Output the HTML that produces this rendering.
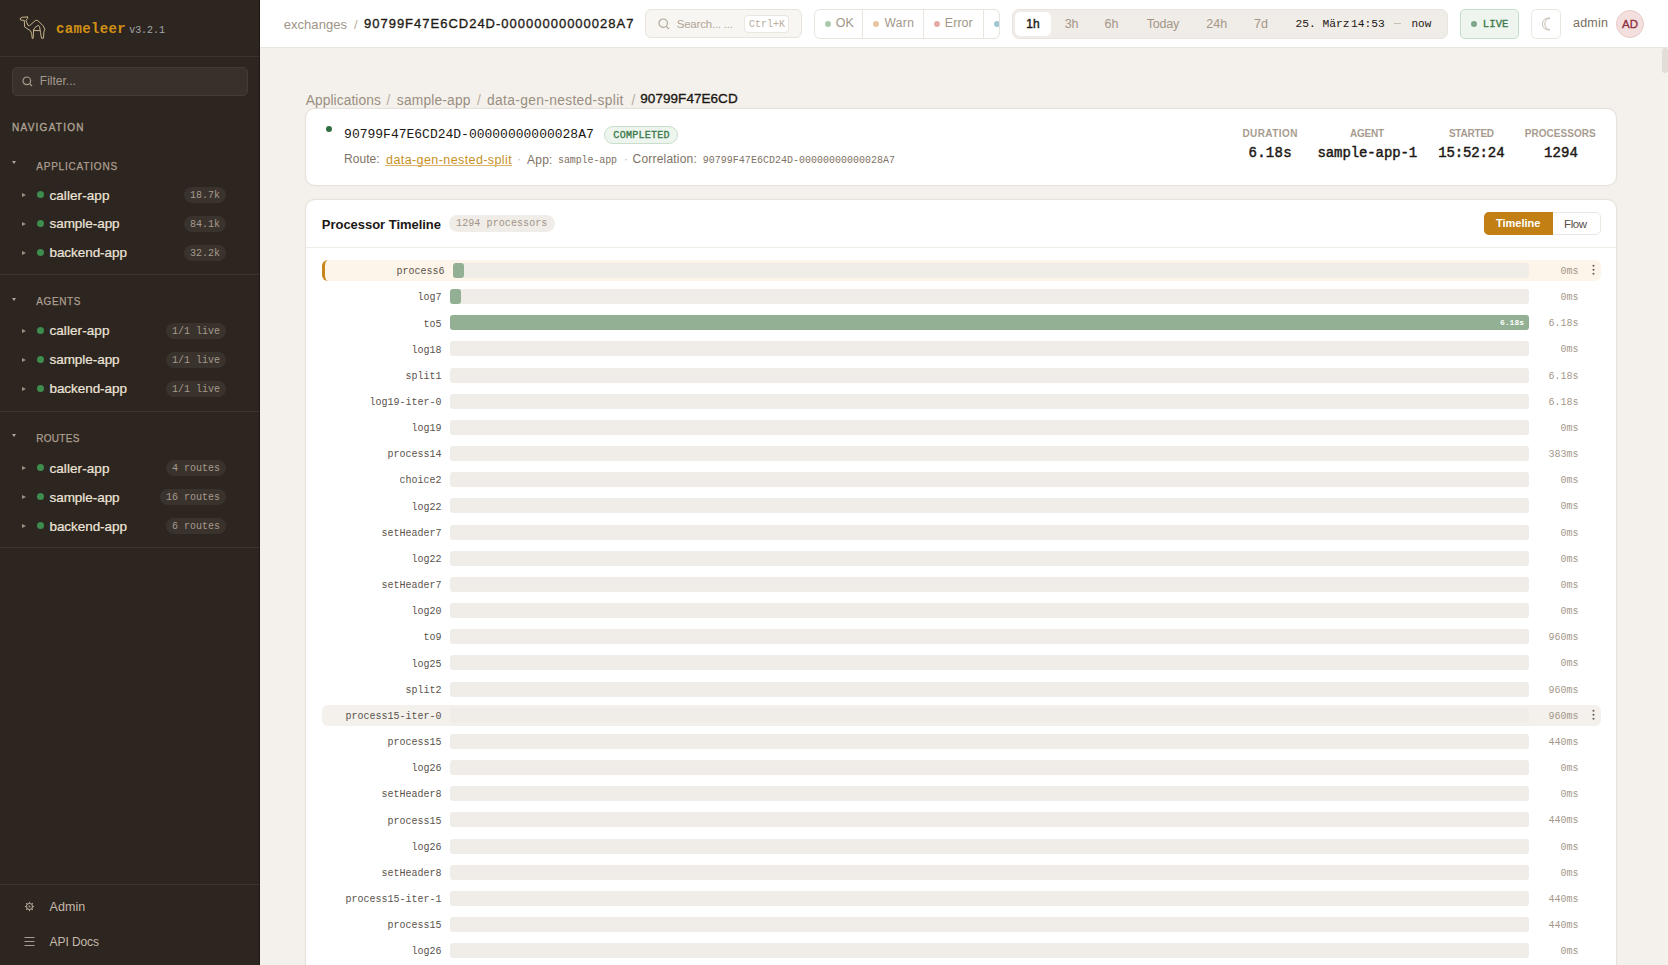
<!DOCTYPE html>
<html><head><meta charset="utf-8"><style>
*{box-sizing:border-box;margin:0;padding:0}
html,body{width:1668px;height:965px;overflow:hidden;background:#f4f1ec;font-family:"Liberation Sans",sans-serif}
.mono{font-family:"Liberation Mono",monospace}
.abs{position:absolute;white-space:nowrap}
#sb{position:absolute;left:0;top:0;width:260px;height:965px;background:#2d2520;border-right:1px solid #1c1713;z-index:1}
.sep{position:absolute;left:0;width:259px;height:1px;background:#3b332c}
.sbh{position:absolute;left:36px;font-size:10px;font-weight:bold;color:#b5a797;letter-spacing:0.65px;line-height:10px}
.caret{position:absolute;left:12px;width:0;height:0;border-left:2px solid transparent;border-right:2px solid transparent;border-top:3px solid #b5a797}
.item{position:absolute;left:0;width:259px;height:20px}
.item .tri{position:absolute;left:21.5px;top:8px;width:0;height:0;border-top:2.2px solid transparent;border-bottom:2.2px solid transparent;border-left:4px solid #9d9183}
.item .dot{position:absolute;left:37px;top:5.5px;width:7px;height:7px;border-radius:50%;background:#3e8c4e}
.item .nm{position:absolute;left:50px;top:2px;font-size:13px;color:#ede5da;line-height:16px;letter-spacing:0.15px;white-space:nowrap}
.item .bd{position:absolute;right:34px;top:2px;height:16px;border-radius:8px;background:#3a322c;color:#a59a8c;font-family:"Liberation Mono",monospace;font-size:10px;line-height:16px;padding:0 6px;white-space:nowrap}
#hd{position:absolute;left:260px;top:0;width:1408px;height:48px;background:#fff;border-bottom:1px solid #e9e5de}
.card{position:absolute;background:#fff;border:1px solid #e6e1da;box-shadow:0 0 1px rgba(120,100,80,0.12)}

</style></head><body>
<div id="sb">
<svg class="abs" style="left:15px;top:12px" width="35" height="32" viewBox="0 0 35 32" fill="none" stroke="#cdbb8f" stroke-width="0.95" stroke-linejoin="round" stroke-linecap="round">
<path d="M12.6 5 L7.6 5.2 Q5 5.6 5 7.3 Q5.5 8.4 8 8.3 L9.3 8.4 L9.6 14.9 L15.6 18.9 L16.6 21.6 L17.3 26.5 L18.2 26.2 L18.6 17.9"/>
<path d="M12.6 5 L12.6 6.5 L10.9 8.3 L12.9 13.3 L14.6 13.6 L20.6 8.3 L22.9 8.6 L28.2 13.9 L29.9 17.3 L28.9 19.9 L28.5 26.2 L26.5 26.2 L25.5 20.6 L24.6 14.6 L23.2 13.3 L19.9 15.6 L18.6 17.9"/>
<path d="M18.9 18.6 L24.6 18.6"/>
</svg>
<div id="logo" class="abs" style="left:56.10px;top:21.20px;font-family:'Liberation Mono',monospace;font-size:14px;font-weight:bold;color:#d29014;line-height:17px;letter-spacing:0.329px;">cameleer</div>
<div id="ver" class="abs" style="left:129.18px;top:25.44px;font-family:'Liberation Mono',monospace;font-size:10px;color:#a3a8ad;line-height:12px;letter-spacing:-0.036px;">v3.2.1</div>
<div class="sep" style="top:56px"></div>
<div class="abs" style="left:12px;top:67px;width:236px;height:29px;border-radius:5px;background:#38312b;border:1px solid #443b34"></div>
<svg class="abs" style="left:22px;top:76px" width="11" height="11" viewBox="0 0 11 11" fill="none" stroke="#a89d90" stroke-width="1.2"><circle cx="4.8" cy="4.8" r="3.8"/><path d="M7.6 7.6 L10 10"/></svg>
<div id="filter" class="abs" style="left:39.82px;top:74.36px;font-size:12px;color:#a39a90;line-height:14px;letter-spacing:-0.001px;">Filter...</div>
<div id="nav" class="abs" style="left:12.00px;top:122.10px;font-size:10px;color:#b0a596;line-height:12px;letter-spacing:1.250px;-webkit-text-stroke:0.3px #b0a596">NAVIGATION</div>
<div class="caret" style="top:161px"></div>
<div id="apps" class="abs" style="left:36.18px;top:160.80px;font-size:10px;color:#ab9e8f;line-height:12px;letter-spacing:0.808px;-webkit-text-stroke:0.25px #ab9e8f">APPLICATIONS</div>
<div class="item" style="top:185px"><div class="tri"></div><div class="dot"></div></div>
<div id="apps_n0" class="abs" style="left:49.46px;top:187.60px;font-size:13.5px;color:#ede5da;line-height:16px;letter-spacing:0.080px;-webkit-text-stroke:0.2px #ede5da">caller-app</div>
<div class="abs mono" style="left:184px;top:187px;width:42px;height:16px;border-radius:8px;background:#3a322c;color:#a59a8c;font-size:10px;line-height:17px;text-align:center">18.7k</div>
<div class="item" style="top:214px"><div class="tri"></div><div class="dot"></div></div>
<div id="apps_n1" class="abs" style="left:49.46px;top:216.40px;font-size:13.5px;color:#ede5da;line-height:16px;letter-spacing:-0.040px;-webkit-text-stroke:0.2px #ede5da">sample-app</div>
<div class="abs mono" style="left:184px;top:216px;width:42px;height:16px;border-radius:8px;background:#3a322c;color:#a59a8c;font-size:10px;line-height:17px;text-align:center">84.1k</div>
<div class="item" style="top:243px"><div class="tri"></div><div class="dot"></div></div>
<div id="apps_n2" class="abs" style="left:49.46px;top:244.84px;font-size:13.5px;color:#ede5da;line-height:16px;letter-spacing:-0.054px;-webkit-text-stroke:0.2px #ede5da">backend-app</div>
<div class="abs mono" style="left:184px;top:245px;width:42px;height:16px;border-radius:8px;background:#3a322c;color:#a59a8c;font-size:10px;line-height:17px;text-align:center">32.2k</div>
<div class="sep" style="top:274px"></div>
<div class="caret" style="top:298px"></div>
<div id="agents" class="abs" style="left:36.18px;top:296.04px;font-size:10px;color:#ab9e8f;line-height:12px;letter-spacing:0.638px;-webkit-text-stroke:0.25px #ab9e8f">AGENTS</div>
<div class="item" style="top:321px"><div class="tri"></div><div class="dot"></div></div>
<div id="agents_n0" class="abs" style="left:49.46px;top:323.28px;font-size:13.5px;color:#ede5da;line-height:16px;letter-spacing:0.080px;-webkit-text-stroke:0.2px #ede5da">caller-app</div>
<div class="abs mono" style="left:166px;top:323px;width:60px;height:16px;border-radius:8px;background:#3a322c;color:#a59a8c;font-size:10px;line-height:17px;text-align:center">1/1 live</div>
<div class="item" style="top:350px"><div class="tri"></div><div class="dot"></div></div>
<div id="agents_n1" class="abs" style="left:49.46px;top:352.28px;font-size:13.5px;color:#ede5da;line-height:16px;letter-spacing:-0.040px;-webkit-text-stroke:0.2px #ede5da">sample-app</div>
<div class="abs mono" style="left:166px;top:352px;width:60px;height:16px;border-radius:8px;background:#3a322c;color:#a59a8c;font-size:10px;line-height:17px;text-align:center">1/1 live</div>
<div class="item" style="top:379px"><div class="tri"></div><div class="dot"></div></div>
<div id="agents_n2" class="abs" style="left:49.46px;top:381.28px;font-size:13.5px;color:#ede5da;line-height:16px;letter-spacing:-0.054px;-webkit-text-stroke:0.2px #ede5da">backend-app</div>
<div class="abs mono" style="left:166px;top:381px;width:60px;height:16px;border-radius:8px;background:#3a322c;color:#a59a8c;font-size:10px;line-height:17px;text-align:center">1/1 live</div>
<div class="sep" style="top:411px"></div>
<div class="caret" style="top:434px"></div>
<div id="routes" class="abs" style="left:36.18px;top:433.48px;font-size:10px;color:#ab9e8f;line-height:12px;letter-spacing:0.314px;-webkit-text-stroke:0.25px #ab9e8f">ROUTES</div>
<div class="item" style="top:458px"><div class="tri"></div><div class="dot"></div></div>
<div id="routes_n0" class="abs" style="left:49.46px;top:460.88px;font-size:13.5px;color:#ede5da;line-height:16px;letter-spacing:0.080px;-webkit-text-stroke:0.2px #ede5da">caller-app</div>
<div class="abs mono" style="left:166px;top:460px;width:60px;height:16px;border-radius:8px;background:#3a322c;color:#a59a8c;font-size:10px;line-height:17px;text-align:center">4 routes</div>
<div class="item" style="top:487px"><div class="tri"></div><div class="dot"></div></div>
<div id="routes_n1" class="abs" style="left:49.46px;top:489.88px;font-size:13.5px;color:#ede5da;line-height:16px;letter-spacing:-0.040px;-webkit-text-stroke:0.2px #ede5da">sample-app</div>
<div class="abs mono" style="left:160px;top:489px;width:66px;height:16px;border-radius:8px;background:#3a322c;color:#a59a8c;font-size:10px;line-height:17px;text-align:center">16 routes</div>
<div class="item" style="top:516px"><div class="tri"></div><div class="dot"></div></div>
<div id="routes_n2" class="abs" style="left:49.46px;top:518.88px;font-size:13.5px;color:#ede5da;line-height:16px;letter-spacing:-0.054px;-webkit-text-stroke:0.2px #ede5da">backend-app</div>
<div class="abs mono" style="left:166px;top:518px;width:60px;height:16px;border-radius:8px;background:#3a322c;color:#a59a8c;font-size:10px;line-height:17px;text-align:center">6 routes</div>
<div class="sep" style="top:547px"></div>
<div class="sep" style="top:884px"></div>
<svg class="abs" style="left:24px;top:901px" width="11" height="11" viewBox="0 0 11 11" fill="none" stroke="#a89d90" stroke-width="1.1"><circle cx="5.5" cy="5.5" r="3"/><circle cx="5.5" cy="5.5" r="0.9" fill="#a89d90" stroke="none"/><path d="M5.5 0.8V2.3M5.5 8.7V10.2M0.8 5.5H2.3M8.7 5.5H10.2M2.2 2.2L3.2 3.2M7.8 7.8L8.8 8.8M2.2 8.8L3.2 7.8M7.8 3.2L8.8 2.2"/></svg>
<div id="admin_sb" class="abs" style="left:49.54px;top:900.18px;font-size:12.5px;color:#c5b9ab;line-height:15px;letter-spacing:0.087px;">Admin</div>
<svg class="abs" style="left:24px;top:936px" width="11" height="11" viewBox="0 0 11 11" fill="none" stroke="#a89d90" stroke-width="1.1"><path d="M0.5 1.5H10.5M0.5 5.5H10.5M0.5 9.5H10.5"/></svg>
<div id="apidocs" class="abs" style="left:49.54px;top:935.02px;font-size:12px;color:#c5b9ab;line-height:14px;letter-spacing:-0.078px;">API Docs</div>
</div>
<div id="hd"></div>
<div id="exch" class="abs" style="left:283.64px;top:16.54px;font-size:13px;color:#a09486;line-height:16px;letter-spacing:0.066px;">exchanges</div>
<div id="hslash" class="abs" style="left:354.00px;top:16.90px;font-size:13px;color:#b8ada0;line-height:16px;letter-spacing:0.000px;">/</div>
<div id="hid" class="abs" style="left:364.00px;top:15.76px;font-size:13px;color:#1f1b17;line-height:16px;letter-spacing:0.995px;-webkit-text-stroke:0.35px #1f1b17">90799F47E6CD24D-00000000000028A7</div>
<div class="abs" style="left:645px;top:9px;width:157px;height:29px;border-radius:6px;background:#f8f6f2;border:1px solid #e8e3dc"></div>
<svg class="abs" style="left:658px;top:18px" width="12" height="12" viewBox="0 0 12 12" fill="none" stroke="#b1a698" stroke-width="1.2"><circle cx="5.2" cy="5.2" r="4.2"/><path d="M8.3 8.3 L11 11"/></svg>
<div id="search" class="abs" style="left:676.72px;top:17.00px;font-size:11.5px;color:#b1a597;line-height:14px;letter-spacing:-0.210px;">Search... ...</div>
<div class="abs" style="left:744px;top:15px;width:45px;height:18px;border-radius:4px;background:#fff;border:1px solid #ebe6df"></div>
<div id="ctrlk" class="abs" style="left:749.00px;top:18.50px;font-family:'Liberation Mono',monospace;font-size:10px;color:#b8ad9f;line-height:12px;letter-spacing:0.000px;">Ctrl+K</div>
<div class="abs" style="left:814px;top:9px;width:186px;height:30px;border-radius:6px;background:#fff;border:1px solid #e8e3dc;overflow:hidden">
<div class="abs" style="left:47px;top:0;width:1px;height:28px;background:#ebe6df"></div><div class="abs" style="left:108px;top:0;width:1px;height:28px;background:#ebe6df"></div><div class="abs" style="left:168px;top:0;width:1px;height:28px;background:#ebe6df"></div>
<div class="abs" style="left:9.5px;top:10.5px;width:6.2px;height:6.2px;border-radius:50%;background:#a9c9ab"></div>
<div class="abs" style="left:57.5px;top:10.5px;width:6.2px;height:6.2px;border-radius:50%;background:#e8c59c"></div>
<div class="abs" style="left:119px;top:10.5px;width:6.2px;height:6.2px;border-radius:50%;background:#e8a9a9"></div>
<div class="abs" style="left:179px;top:10.5px;width:6.2px;height:6.2px;border-radius:50%;background:#9fc8d2"></div>
</div>
<div id="ok" class="abs" style="left:835.72px;top:15.90px;font-size:12.5px;color:#a39687;line-height:15px;letter-spacing:0.000px;">OK</div>
<div id="warn" class="abs" style="left:884.54px;top:15.90px;font-size:12px;color:#a39687;line-height:14px;letter-spacing:0.350px;">Warn</div>
<div id="error" class="abs" style="left:944.82px;top:15.90px;font-size:12.5px;color:#a39687;line-height:15px;letter-spacing:0.045px;">Error</div>
<div class="abs" style="left:1012px;top:9px;width:436px;height:30px;border-radius:7px;background:#f0ece7;border:1px solid #e9e4dd"></div>
<div class="abs" style="left:1015px;top:12px;width:36px;height:24px;border-radius:5px;background:#fff"></div>
<div id="t1h" class="abs" style="left:1026.34px;top:17.18px;font-size:12px;color:#1c1814;line-height:14px;letter-spacing:0.000px;-webkit-text-stroke:0.4px #1c1814">1h</div>
<div id="t3h" class="abs" style="left:1064.68px;top:17.18px;font-size:12.5px;color:#a39687;line-height:15px;letter-spacing:0.000px;">3h</div>
<div id="t6h" class="abs" style="left:1104.50px;top:17.18px;font-size:12.5px;color:#a39687;line-height:15px;letter-spacing:0.000px;">6h</div>
<div id="ttoday" class="abs" style="left:1146.68px;top:16.70px;font-size:12.5px;color:#a39687;line-height:15px;letter-spacing:-0.177px;">Today</div>
<div id="t24h" class="abs" style="left:1206.36px;top:17.18px;font-size:12.5px;color:#a39687;line-height:15px;letter-spacing:0.000px;">24h</div>
<div id="t7d" class="abs" style="left:1254.00px;top:17.18px;font-size:12.5px;color:#a39687;line-height:15px;letter-spacing:0.000px;">7d</div>
<div id="tdate" class="abs" style="left:1295.50px;top:17.00px;font-family:'Liberation Mono',monospace;font-size:11.25px;color:#1c1814;line-height:14px;letter-spacing:0.000px;white-space:pre">25. März</div>
<div id="ttime" class="abs" style="left:1351.00px;top:17.00px;font-family:'Liberation Mono',monospace;font-size:11.25px;color:#1c1814;line-height:14px;letter-spacing:0.000px;">14:53</div>
<div class="abs" style="left:1394px;top:23px;width:7px;height:1px;background:#c9bfb3"></div>
<div id="tnow" class="abs" style="left:1411.46px;top:17.90px;font-family:'Liberation Mono',monospace;font-size:11px;color:#1c1814;line-height:13px;letter-spacing:0.000px;">now</div>
<div class="abs" style="left:1460px;top:9px;width:59px;height:30px;border-radius:5px;background:#eef5ee;border:1px solid #c5dec8"></div>
<div class="abs" style="left:1470.5px;top:20.5px;width:6px;height:6px;border-radius:50%;background:#7ea88a"></div>
<div id="live" class="abs" style="left:1482.82px;top:18.20px;font-family:'Liberation Mono',monospace;font-size:10.5px;color:#3b7a4b;line-height:13px;letter-spacing:0.120px;-webkit-text-stroke:0.35px #3b7a4b">LIVE</div>
<div class="abs" style="left:1531px;top:9px;width:30px;height:30px;border-radius:5px;background:#fff;border:1px solid #ebe6df"></div>
<svg class="abs" style="left:1541.5px;top:16.5px" width="12" height="14" viewBox="0 0 12 14" fill="none" stroke="#c9bfb3" stroke-width="1"><path d="M8 1.2 A6 6 0 1 0 8 12.8 A5 5.6 0 1 1 8 1.2 Z"/></svg>
<div id="hadmin" class="abs" style="left:1573.00px;top:16.30px;font-size:12.5px;color:#7a6f63;line-height:15px;letter-spacing:0.225px;">admin</div>
<div class="abs" style="left:1616px;top:10px;width:28px;height:28px;border-radius:50%;background:#f4dfdf;border:1px solid #eac9c9;font-size:11.5px;color:#8c2b3b;line-height:26px;text-align:center;-webkit-text-stroke:0.3px #8c2b3b">AD</div>
<div class="abs" style="left:1662px;top:48px;width:6px;height:25px;border-radius:3px;background:#e2ddd6"></div>
<div id="bc1" class="abs" style="left:305.72px;top:91.54px;font-size:13.8px;color:#9a8e81;line-height:17px;letter-spacing:0.068px;">Applications</div>
<div id="bcs1" class="abs" style="left:386.54px;top:91.72px;font-size:13.8px;color:#b8ada0;line-height:17px;letter-spacing:0.000px;">/</div>
<div id="bc2" class="abs" style="left:396.86px;top:91.54px;font-size:13.8px;color:#9a8e81;line-height:17px;letter-spacing:0.160px;">sample-app</div>
<div id="bcs2" class="abs" style="left:477.00px;top:91.72px;font-size:13.8px;color:#b8ada0;line-height:17px;letter-spacing:0.000px;">/</div>
<div id="bc3" class="abs" style="left:487.00px;top:91.54px;font-size:13.8px;color:#9a8e81;line-height:17px;letter-spacing:0.342px;">data-gen-nested-split</div>
<div id="bcs3" class="abs" style="left:631.40px;top:91.72px;font-size:13.8px;color:#b8ada0;line-height:17px;letter-spacing:0.000px;">/</div>
<div id="bc4" class="abs" style="left:640.32px;top:90.76px;font-size:13.5px;color:#1c1814;line-height:16px;letter-spacing:0.048px;-webkit-text-stroke:0.35px #1c1814">90799F47E6CD</div>
<div class="card" style="left:305px;top:108px;width:1312px;height:78px;border-radius:10px"></div>
<div class="abs" style="left:326px;top:125.5px;width:6px;height:6px;border-radius:50%;background:#2f6e3f"></div>
<div id="c1id" class="abs" style="left:344.10px;top:127.30px;font-family:'Liberation Mono',monospace;font-size:13px;color:#1c1814;line-height:16px;letter-spacing:0.000px;">90799F47E6CD24D-00000000000028A7</div>
<div class="abs" style="left:604px;top:126px;width:74px;height:18px;border-radius:9px;background:#edf5ee;border:1px solid #c9dfcc"></div>
<div id="compl" class="abs" style="left:613.36px;top:129.86px;font-family:'Liberation Mono',monospace;font-size:10px;color:#3c7a4c;line-height:12px;letter-spacing:0.269px;-webkit-text-stroke:0.35px #3c7a4c">COMPLETED</div>
<div id="route" class="abs" style="left:344.10px;top:152.18px;font-size:12px;color:#7e7265;line-height:14px;letter-spacing:0.036px;">Route:</div>
<div id="rlink" class="abs" style="left:386.08px;top:152.90px;font-size:12.5px;color:#c8901f;line-height:15px;letter-spacing:0.410px;">data-gen-nested-split</div>
<div class="abs" style="left:385px;top:164.5px;width:127px;height:1px;background:#dcb469"></div>
<div id="dot1" class="abs" style="left:517.00px;top:152.00px;font-size:12px;color:#c5bbb0;line-height:14px;letter-spacing:0.000px;">·</div>
<div id="app" class="abs" style="left:527.00px;top:152.90px;font-size:12px;color:#7e7265;line-height:14px;letter-spacing:0.240px;">App:</div>
<div id="appv" class="abs" style="left:558.00px;top:155.26px;font-family:'Liberation Mono',monospace;font-size:10px;color:#7e7265;line-height:12px;letter-spacing:-0.100px;">sample-app</div>
<div id="dot2" class="abs" style="left:624.00px;top:152.00px;font-size:12px;color:#c5bbb0;line-height:14px;letter-spacing:0.000px;">·</div>
<div id="corr" class="abs" style="left:632.54px;top:152.18px;font-size:12px;color:#7e7265;line-height:14px;letter-spacing:0.197px;">Correlation:</div>
<div id="corrv" class="abs" style="left:702.82px;top:154.80px;font-family:'Liberation Mono',monospace;font-size:10px;color:#7e7265;line-height:12px;letter-spacing:0.007px;">90799F47E6CD24D-00000000000028A7</div>
<div id="sdurL" class="abs" style="left:1242.48px;top:127.90px;font-size:10px;font-weight:bold;color:#a89c8f;line-height:12px;letter-spacing:0.408px;">DURATION</div>
<div id="sdurV" class="abs" style="left:1248.48px;top:144.60px;font-family:'Liberation Mono',monospace;font-size:14px;color:#1c1814;line-height:17px;letter-spacing:0.270px;-webkit-text-stroke:0.45px #1c1814">6.18s</div>
<div id="sagentL" class="abs" style="left:1350.00px;top:127.90px;font-size:10px;font-weight:bold;color:#a89c8f;line-height:12px;letter-spacing:-0.252px;">AGENT</div>
<div id="sagentV" class="abs" style="left:1317.48px;top:145.08px;font-family:'Liberation Mono',monospace;font-size:14px;color:#1c1814;line-height:17px;letter-spacing:-0.096px;-webkit-text-stroke:0.45px #1c1814">sample-app-1</div>
<div id="sstartL" class="abs" style="left:1448.88px;top:127.90px;font-size:10px;font-weight:bold;color:#a89c8f;line-height:12px;letter-spacing:-0.210px;">STARTED</div>
<div id="sstartV" class="abs" style="left:1438.24px;top:144.60px;font-family:'Liberation Mono',monospace;font-size:14px;color:#1c1814;line-height:17px;letter-spacing:-0.129px;-webkit-text-stroke:0.45px #1c1814">15:52:24</div>
<div id="sprocL" class="abs" style="left:1524.86px;top:127.90px;font-size:10px;font-weight:bold;color:#a89c8f;line-height:12px;letter-spacing:0.030px;">PROCESSORS</div>
<div id="sprocV" class="abs" style="left:1544.00px;top:144.60px;font-family:'Liberation Mono',monospace;font-size:14px;color:#1c1814;line-height:17px;letter-spacing:0.060px;-webkit-text-stroke:0.45px #1c1814">1294</div>
<div class="card" style="left:305px;top:199px;width:1312px;height:800px;border-radius:10px"></div>
<div class="abs" style="left:306px;top:247px;width:1310px;height:1px;background:#efebe5"></div>
<div id="ptitle" class="abs" style="left:321.82px;top:216.54px;font-size:13px;font-weight:bold;color:#1c1814;line-height:16px;letter-spacing:-0.030px;">Processor Timeline</div>
<div class="abs" style="left:449px;top:215px;width:106px;height:17px;border-radius:9px;background:#f0ece7"></div>
<div id="pbadge" class="abs" style="left:456.10px;top:218.38px;font-family:'Liberation Mono',monospace;font-size:10px;color:#a09588;line-height:12px;letter-spacing:0.090px;">1294 processors</div>
<div class="abs" style="left:1484px;top:212px;width:117px;height:23px;border-radius:5px;background:#fff;border:1px solid #ebe6df"></div>
<div class="abs" style="left:1484px;top:212px;width:69px;height:23px;border-radius:5px 0 0 5px;background:#c17f14"></div>
<div id="tl" class="abs" style="left:1496.00px;top:217.44px;font-size:11px;font-weight:bold;color:#fff;line-height:13px;letter-spacing:0.000px;">Timeline</div>
<div id="flow" class="abs" style="left:1564.10px;top:216.54px;font-size:11.5px;color:#5a5047;line-height:14px;letter-spacing:-0.420px;">Flow</div>
<div class="abs" style="left:322px;top:260.0px;width:1279px;height:21px;border-radius:6px;background:#fdf5e9"></div>
<div class="abs" style="left:322px;top:260.0px;width:8px;height:21px;border-radius:6px 0 0 6px;border-left:3px solid #c8861a"></div>
<div class="abs mono" style="left:300px;width:144.5px;top:264.2px;text-align:right;font-size:10px;line-height:15px;color:#5a534c">process6</div>
<div class="abs" style="left:453px;top:263.0px;width:1075.5px;height:15px;border-radius:3px;background:#f0ede8"></div>
<div class="abs" style="left:453px;top:263.0px;width:10.5px;height:15px;border-radius:3px;background:#93b094"></div>
<div class="abs mono" style="left:1500px;width:78.5px;top:264.0px;text-align:right;font-size:10px;line-height:15px;color:#a4978a">0ms</div>
<svg class="abs" style="left:1591px;top:264.0px" width="5" height="12" viewBox="0 0 5 12"><circle cx="2.5" cy="1.8" r="1.05" fill="#6b6057"/><circle cx="2.5" cy="5.8" r="1.05" fill="#6b6057"/><circle cx="2.5" cy="9.8" r="1.05" fill="#6b6057"/></svg>
<div class="abs mono" style="left:300px;width:141.5px;top:290.36px;text-align:right;font-size:10px;line-height:15px;color:#5a534c">log7</div>
<div class="abs" style="left:450px;top:289.16px;width:1078.5px;height:15px;border-radius:3px;background:#f0ede8"></div>
<div class="abs" style="left:450px;top:289.16px;width:10.5px;height:15px;border-radius:3px;background:#93b094"></div>
<div class="abs mono" style="left:1500px;width:78.5px;top:290.16px;text-align:right;font-size:10px;line-height:15px;color:#a4978a">0ms</div>
<div class="abs mono" style="left:300px;width:141.5px;top:316.52px;text-align:right;font-size:10px;line-height:15px;color:#5a534c">to5</div>
<div class="abs" style="left:450px;top:315.32px;width:1078.5px;height:15px;border-radius:3px;background:#f0ede8"></div>
<div class="abs" style="left:450px;top:315.32px;width:1078.5px;height:15px;border-radius:3px;background:#93b094"></div>
<div class="abs mono" style="left:1480px;width:44px;top:316.32px;text-align:right;font-size:8px;font-weight:bold;line-height:13px;color:#fff">6.18s</div>
<div class="abs mono" style="left:1500px;width:78.5px;top:316.32px;text-align:right;font-size:10px;line-height:15px;color:#a4978a">6.18s</div>
<div class="abs mono" style="left:300px;width:141.5px;top:342.68px;text-align:right;font-size:10px;line-height:15px;color:#5a534c">log18</div>
<div class="abs" style="left:450px;top:341.48px;width:1078.5px;height:15px;border-radius:3px;background:#f0ede8"></div>
<div class="abs mono" style="left:1500px;width:78.5px;top:342.48px;text-align:right;font-size:10px;line-height:15px;color:#a4978a">0ms</div>
<div class="abs mono" style="left:300px;width:141.5px;top:368.84px;text-align:right;font-size:10px;line-height:15px;color:#5a534c">split1</div>
<div class="abs" style="left:450px;top:367.64px;width:1078.5px;height:15px;border-radius:3px;background:#f0ede8"></div>
<div class="abs mono" style="left:1500px;width:78.5px;top:368.64px;text-align:right;font-size:10px;line-height:15px;color:#a4978a">6.18s</div>
<div class="abs mono" style="left:300px;width:141.5px;top:395.0px;text-align:right;font-size:10px;line-height:15px;color:#5a534c">log19-iter-0</div>
<div class="abs" style="left:450px;top:393.8px;width:1078.5px;height:15px;border-radius:3px;background:#f0ede8"></div>
<div class="abs mono" style="left:1500px;width:78.5px;top:394.8px;text-align:right;font-size:10px;line-height:15px;color:#a4978a">6.18s</div>
<div class="abs mono" style="left:300px;width:141.5px;top:421.16px;text-align:right;font-size:10px;line-height:15px;color:#5a534c">log19</div>
<div class="abs" style="left:450px;top:419.96000000000004px;width:1078.5px;height:15px;border-radius:3px;background:#f0ede8"></div>
<div class="abs mono" style="left:1500px;width:78.5px;top:420.96000000000004px;text-align:right;font-size:10px;line-height:15px;color:#a4978a">0ms</div>
<div class="abs mono" style="left:300px;width:141.5px;top:447.32px;text-align:right;font-size:10px;line-height:15px;color:#5a534c">process14</div>
<div class="abs" style="left:450px;top:446.12px;width:1078.5px;height:15px;border-radius:3px;background:#f0ede8"></div>
<div class="abs mono" style="left:1500px;width:78.5px;top:447.12px;text-align:right;font-size:10px;line-height:15px;color:#a4978a">383ms</div>
<div class="abs mono" style="left:300px;width:141.5px;top:473.47999999999996px;text-align:right;font-size:10px;line-height:15px;color:#5a534c">choice2</div>
<div class="abs" style="left:450px;top:472.28px;width:1078.5px;height:15px;border-radius:3px;background:#f0ede8"></div>
<div class="abs mono" style="left:1500px;width:78.5px;top:473.28px;text-align:right;font-size:10px;line-height:15px;color:#a4978a">0ms</div>
<div class="abs mono" style="left:300px;width:141.5px;top:499.64px;text-align:right;font-size:10px;line-height:15px;color:#5a534c">log22</div>
<div class="abs" style="left:450px;top:498.44px;width:1078.5px;height:15px;border-radius:3px;background:#f0ede8"></div>
<div class="abs mono" style="left:1500px;width:78.5px;top:499.44px;text-align:right;font-size:10px;line-height:15px;color:#a4978a">0ms</div>
<div class="abs mono" style="left:300px;width:141.5px;top:525.8000000000001px;text-align:right;font-size:10px;line-height:15px;color:#5a534c">setHeader7</div>
<div class="abs" style="left:450px;top:524.6px;width:1078.5px;height:15px;border-radius:3px;background:#f0ede8"></div>
<div class="abs mono" style="left:1500px;width:78.5px;top:525.6px;text-align:right;font-size:10px;line-height:15px;color:#a4978a">0ms</div>
<div class="abs mono" style="left:300px;width:141.5px;top:551.96px;text-align:right;font-size:10px;line-height:15px;color:#5a534c">log22</div>
<div class="abs" style="left:450px;top:550.76px;width:1078.5px;height:15px;border-radius:3px;background:#f0ede8"></div>
<div class="abs mono" style="left:1500px;width:78.5px;top:551.76px;text-align:right;font-size:10px;line-height:15px;color:#a4978a">0ms</div>
<div class="abs mono" style="left:300px;width:141.5px;top:578.1200000000001px;text-align:right;font-size:10px;line-height:15px;color:#5a534c">setHeader7</div>
<div class="abs" style="left:450px;top:576.9200000000001px;width:1078.5px;height:15px;border-radius:3px;background:#f0ede8"></div>
<div class="abs mono" style="left:1500px;width:78.5px;top:577.9200000000001px;text-align:right;font-size:10px;line-height:15px;color:#a4978a">0ms</div>
<div class="abs mono" style="left:300px;width:141.5px;top:604.28px;text-align:right;font-size:10px;line-height:15px;color:#5a534c">log20</div>
<div class="abs" style="left:450px;top:603.0799999999999px;width:1078.5px;height:15px;border-radius:3px;background:#f0ede8"></div>
<div class="abs mono" style="left:1500px;width:78.5px;top:604.0799999999999px;text-align:right;font-size:10px;line-height:15px;color:#a4978a">0ms</div>
<div class="abs mono" style="left:300px;width:141.5px;top:630.44px;text-align:right;font-size:10px;line-height:15px;color:#5a534c">to9</div>
<div class="abs" style="left:450px;top:629.24px;width:1078.5px;height:15px;border-radius:3px;background:#f0ede8"></div>
<div class="abs mono" style="left:1500px;width:78.5px;top:630.24px;text-align:right;font-size:10px;line-height:15px;color:#a4978a">960ms</div>
<div class="abs mono" style="left:300px;width:141.5px;top:656.6px;text-align:right;font-size:10px;line-height:15px;color:#5a534c">log25</div>
<div class="abs" style="left:450px;top:655.4px;width:1078.5px;height:15px;border-radius:3px;background:#f0ede8"></div>
<div class="abs mono" style="left:1500px;width:78.5px;top:656.4px;text-align:right;font-size:10px;line-height:15px;color:#a4978a">0ms</div>
<div class="abs mono" style="left:300px;width:141.5px;top:682.76px;text-align:right;font-size:10px;line-height:15px;color:#5a534c">split2</div>
<div class="abs" style="left:450px;top:681.56px;width:1078.5px;height:15px;border-radius:3px;background:#f0ede8"></div>
<div class="abs mono" style="left:1500px;width:78.5px;top:682.56px;text-align:right;font-size:10px;line-height:15px;color:#a4978a">960ms</div>
<div class="abs" style="left:322px;top:704.72px;width:1279px;height:21px;border-radius:6px;background:#f4f1ec"></div>
<div class="abs mono" style="left:300px;width:141.5px;top:708.9200000000001px;text-align:right;font-size:10px;line-height:15px;color:#5a534c">process15-iter-0</div>
<div class="abs" style="left:450px;top:707.72px;width:1078.5px;height:15px;border-radius:3px;background:#f0ede8"></div>
<div class="abs mono" style="left:1500px;width:78.5px;top:708.72px;text-align:right;font-size:10px;line-height:15px;color:#a4978a">960ms</div>
<svg class="abs" style="left:1591px;top:708.72px" width="5" height="12" viewBox="0 0 5 12"><circle cx="2.5" cy="1.8" r="1.05" fill="#6b6057"/><circle cx="2.5" cy="5.8" r="1.05" fill="#6b6057"/><circle cx="2.5" cy="9.8" r="1.05" fill="#6b6057"/></svg>
<div class="abs mono" style="left:300px;width:141.5px;top:735.08px;text-align:right;font-size:10px;line-height:15px;color:#5a534c">process15</div>
<div class="abs" style="left:450px;top:733.88px;width:1078.5px;height:15px;border-radius:3px;background:#f0ede8"></div>
<div class="abs mono" style="left:1500px;width:78.5px;top:734.88px;text-align:right;font-size:10px;line-height:15px;color:#a4978a">440ms</div>
<div class="abs mono" style="left:300px;width:141.5px;top:761.24px;text-align:right;font-size:10px;line-height:15px;color:#5a534c">log26</div>
<div class="abs" style="left:450px;top:760.04px;width:1078.5px;height:15px;border-radius:3px;background:#f0ede8"></div>
<div class="abs mono" style="left:1500px;width:78.5px;top:761.04px;text-align:right;font-size:10px;line-height:15px;color:#a4978a">0ms</div>
<div class="abs mono" style="left:300px;width:141.5px;top:787.4000000000001px;text-align:right;font-size:10px;line-height:15px;color:#5a534c">setHeader8</div>
<div class="abs" style="left:450px;top:786.2px;width:1078.5px;height:15px;border-radius:3px;background:#f0ede8"></div>
<div class="abs mono" style="left:1500px;width:78.5px;top:787.2px;text-align:right;font-size:10px;line-height:15px;color:#a4978a">0ms</div>
<div class="abs mono" style="left:300px;width:141.5px;top:813.5600000000001px;text-align:right;font-size:10px;line-height:15px;color:#5a534c">process15</div>
<div class="abs" style="left:450px;top:812.36px;width:1078.5px;height:15px;border-radius:3px;background:#f0ede8"></div>
<div class="abs mono" style="left:1500px;width:78.5px;top:813.36px;text-align:right;font-size:10px;line-height:15px;color:#a4978a">440ms</div>
<div class="abs mono" style="left:300px;width:141.5px;top:839.72px;text-align:right;font-size:10px;line-height:15px;color:#5a534c">log26</div>
<div class="abs" style="left:450px;top:838.52px;width:1078.5px;height:15px;border-radius:3px;background:#f0ede8"></div>
<div class="abs mono" style="left:1500px;width:78.5px;top:839.52px;text-align:right;font-size:10px;line-height:15px;color:#a4978a">0ms</div>
<div class="abs mono" style="left:300px;width:141.5px;top:865.88px;text-align:right;font-size:10px;line-height:15px;color:#5a534c">setHeader8</div>
<div class="abs" style="left:450px;top:864.68px;width:1078.5px;height:15px;border-radius:3px;background:#f0ede8"></div>
<div class="abs mono" style="left:1500px;width:78.5px;top:865.68px;text-align:right;font-size:10px;line-height:15px;color:#a4978a">0ms</div>
<div class="abs mono" style="left:300px;width:141.5px;top:892.0400000000001px;text-align:right;font-size:10px;line-height:15px;color:#5a534c">process15-iter-1</div>
<div class="abs" style="left:450px;top:890.84px;width:1078.5px;height:15px;border-radius:3px;background:#f0ede8"></div>
<div class="abs mono" style="left:1500px;width:78.5px;top:891.84px;text-align:right;font-size:10px;line-height:15px;color:#a4978a">440ms</div>
<div class="abs mono" style="left:300px;width:141.5px;top:918.2px;text-align:right;font-size:10px;line-height:15px;color:#5a534c">process15</div>
<div class="abs" style="left:450px;top:917.0px;width:1078.5px;height:15px;border-radius:3px;background:#f0ede8"></div>
<div class="abs mono" style="left:1500px;width:78.5px;top:918.0px;text-align:right;font-size:10px;line-height:15px;color:#a4978a">440ms</div>
<div class="abs mono" style="left:300px;width:141.5px;top:944.36px;text-align:right;font-size:10px;line-height:15px;color:#5a534c">log26</div>
<div class="abs" style="left:450px;top:943.16px;width:1078.5px;height:15px;border-radius:3px;background:#f0ede8"></div>
<div class="abs mono" style="left:1500px;width:78.5px;top:944.16px;text-align:right;font-size:10px;line-height:15px;color:#a4978a">0ms</div>
</body></html>
